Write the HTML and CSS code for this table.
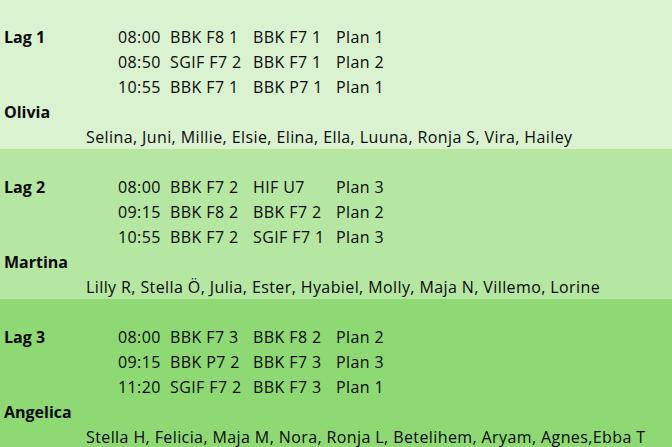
FILE: index.html
```html
<!DOCTYPE html>
<html lang="sv">
<head>
<meta charset="utf-8">
<title>Lag</title>
<link rel="stylesheet" href="styles.css">
</head>
<body>
<div class="sheet">
  <section class="team team-1">
    <div class="row empty"></div>
    <div class="row">
      <div class="cell label">Lag 1</div><div class="cell"></div>
      <div class="cell">08:00</div><div class="cell">BBK F8 1</div><div class="cell">BBK F7 1</div><div class="cell">Plan 1</div>
    </div>
    <div class="row">
      <div class="cell"></div><div class="cell"></div>
      <div class="cell">08:50</div><div class="cell">SGIF F7 2</div><div class="cell">BBK F7 1</div><div class="cell">Plan 2</div>
    </div>
    <div class="row">
      <div class="cell"></div><div class="cell"></div>
      <div class="cell">10:55</div><div class="cell">BBK F7 1</div><div class="cell">BBK P7 1</div><div class="cell">Plan 1</div>
    </div>
    <div class="row">
      <div class="cell label">Olivia</div>
    </div>
    <div class="row">
      <div class="cell"></div>
      <div class="cell names">Selina, Juni, Millie, Elsie, Elina, Ella, Luuna, Ronja S, Vira, Hailey</div>
    </div>
  </section>
  <section class="team team-2">
    <div class="row empty"></div>
    <div class="row">
      <div class="cell label">Lag 2</div><div class="cell"></div>
      <div class="cell">08:00</div><div class="cell">BBK F7 2</div><div class="cell">HIF U7</div><div class="cell">Plan 3</div>
    </div>
    <div class="row">
      <div class="cell"></div><div class="cell"></div>
      <div class="cell">09:15</div><div class="cell">BBK F8 2</div><div class="cell">BBK F7 2</div><div class="cell">Plan 2</div>
    </div>
    <div class="row">
      <div class="cell"></div><div class="cell"></div>
      <div class="cell">10:55</div><div class="cell">BBK F7 2</div><div class="cell">SGIF F7 1</div><div class="cell">Plan 3</div>
    </div>
    <div class="row">
      <div class="cell label">Martina</div>
    </div>
    <div class="row">
      <div class="cell"></div>
      <div class="cell names">Lilly R, Stella Ö, Julia, Ester, Hyabiel, Molly, Maja N, Villemo, Lorine</div>
    </div>
  </section>
  <section class="team team-3">
    <div class="row empty"></div>
    <div class="row">
      <div class="cell label">Lag 3</div><div class="cell"></div>
      <div class="cell">08:00</div><div class="cell">BBK F7 3</div><div class="cell">BBK F8 2</div><div class="cell">Plan 2</div>
    </div>
    <div class="row">
      <div class="cell"></div><div class="cell"></div>
      <div class="cell">09:15</div><div class="cell">BBK P7 2</div><div class="cell">BBK F7 3</div><div class="cell">Plan 3</div>
    </div>
    <div class="row">
      <div class="cell"></div><div class="cell"></div>
      <div class="cell">11:20</div><div class="cell">SGIF F7 2</div><div class="cell">BBK F7 3</div><div class="cell">Plan 1</div>
    </div>
    <div class="row">
      <div class="cell label">Angelica</div>
    </div>
    <div class="row">
      <div class="cell"></div>
      <div class="cell names">Stella H, Felicia, Maja M, Nora, Ronja L, Betelihem, Aryam, Agnes,Ebba T</div>
    </div>
  </section>
</div>
</body>
</html>
```
FILE: styles.css
```css
html, body {
  margin: 0;
  padding: 0;
}
body {
  font-family: "Open Sans", "Noto Sans", sans-serif;
  font-size: 16px;
  letter-spacing: 0.4px;
  color: #0a0a0a;
  overflow: hidden;
}
.sheet {
  display: flex;
  flex-direction: column;
  width: 672px;
}
.team {
  display: flex;
  flex-direction: column;
}
.team-1 { background: #daf2d0; }
.team-2 { background: #b5e6a2; }
.team-3 { background: #8ed973; }
.row {
  display: grid;
  grid-template-columns: 82px 32px 52px 83px 83px 1fr;
  height: 25px;
  line-height: 25px;
}
.cell {
  padding: 1px 0 0 4px;
  white-space: nowrap;
  overflow: visible;
}
.label {
  font-weight: 700;
  letter-spacing: 0;
}
.names {
  grid-column: 2 / 7;
}
.team-1 .row:first-child { height: 24px; }
```
